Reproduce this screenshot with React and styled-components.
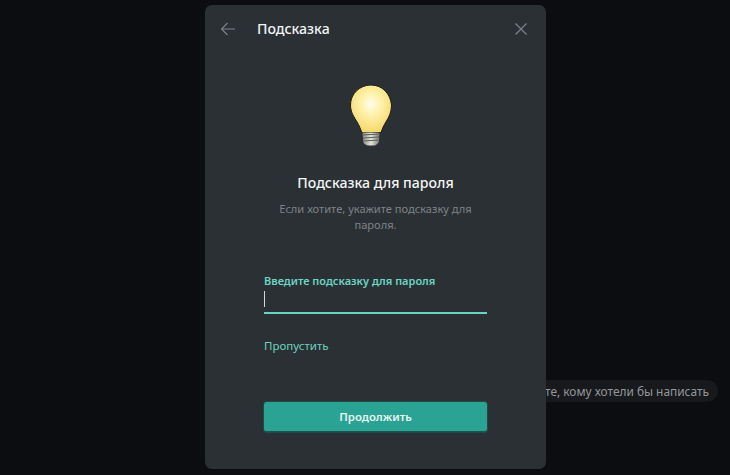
import styled, { createGlobalStyle } from "styled-components";

const GlobalStyle = createGlobalStyle`
  html, body {
    margin: 0;
    height: 100%;
    background: #0c0d10;
    font-family: "Noto Sans", "Open Sans", sans-serif;
  }
  #root {
    height: 100%;
  }
`;

const Page = styled.div`
  position: relative;
  width: 730px;
  height: 475px;
  overflow: hidden;
  padding: 5px 0 0 205px;
  box-sizing: border-box;
`;

const ChatHint = styled.div`
  position: absolute;
  left: 450px;
  top: 380px;
  width: 268px;
  height: 22px;
  box-sizing: border-box;
  padding-right: 9px;
  border-radius: 11px;
  background: #17191d;
  color: #94979a;
  font-size: 11.9px;
  line-height: 22px;
  text-align: right;
  white-space: nowrap;
`;

const Modal = styled.div`
  position: relative;
  width: 341px;
  height: 464px;
  border-radius: 7px;
  background: #2a3034;
  display: flex;
  flex-direction: column;
`;

const Header = styled.header`
  height: 48px;
  display: flex;
  align-items: center;
  padding: 0 17px 0 15px;
`;

const IconButton = styled.button`
  width: 16px;
  height: 16px;
  padding: 0;
  border: 0;
  background: none;
  color: #7c8287;
  display: flex;
`;

const HeaderTitle = styled.h1`
  flex: 1;
  margin: 0 0 2px 21px;
  color: #f1f3f3;
  font-size: 14.1px;
  font-weight: 500;
`;

const Body = styled.div`
  display: flex;
  flex-direction: column;
  padding: 0 59px;
`;

const Bulb = styled.svg`
  display: block;
  align-self: center;
  margin: 31px 10px 0 0;
`;

const Title = styled.h2`
  margin: 26px -20px 0;
  color: #f3f5f5;
  font-size: 14.1px;
  line-height: 20px;
  font-weight: 500;
  text-align: center;
`;

const Description = styled.p`
  margin: 8px 0 0;
  color: #7d8388;
  font-size: 11.1px;
  line-height: 16px;
  text-align: center;
`;

const FieldLabel = styled.label`
  display: block;
  margin-top: 40px;
  color: #6bd6c3;
  font-size: 11px;
  line-height: 16px;
  font-weight: 600;
`;

const Field = styled.div`
  height: 23px;
  margin-top: 2px;
  box-sizing: border-box;
  border-bottom: 2px solid #66d5c2;
`;

const Caret = styled.div`
  width: 1px;
  height: 16px;
  background: #d4d7d8;
`;

const SkipLink = styled.a`
  display: block;
  margin-top: 24px;
  color: #6bd0bf;
  font-size: 11.5px;
  line-height: 16px;
`;

const SubmitButton = styled.button`
  height: 30px;
  margin-top: 48px;
  border: 0;
  border-bottom: 1px solid #16564e;
  border-radius: 3px;
  background: #2ba394;
  box-shadow: 0 0 0 1px #234a47;
  color: #e6f6f3;
  font-family: inherit;
  font-size: 11.4px;
  font-weight: 600;
`;

function LightBulb() {
  return (
    <Bulb width="42" height="63" viewBox="0 0 42 62">
      <defs>
        <radialGradient id="glass" cx="0.5" cy="0.4" r="0.62">
          <stop offset="0" stopColor="#fffdf0" />
          <stop offset="0.35" stopColor="#fff3b0" />
          <stop offset="1" stopColor="#f4d768" />
        </radialGradient>
        <linearGradient id="cap" x1="0" x2="1" y1="0" y2="0">
          <stop offset="0" stopColor="#8a8a84" />
          <stop offset="0.5" stopColor="#e4e4de" />
          <stop offset="1" stopColor="#77776f" />
        </linearGradient>
      </defs>
      <path
        d="M21 .5C9.6.5.5 9.4.5 20.5c0 7.4 3.6 12 6.6 17 2 3.4 3.6 7 4.6 10.5h19.4c1-3.6 2.9-7.4 4.9-10.7 3-4.9 5.5-9.4 5.5-16.8C40.5 9.4 32.4.5 21 .5z"
        fill="url(#glass)"
        stroke="#1f1c12"
        strokeWidth="1"
      />
      <path d="M12.5 48h17l-.6 9.5c-.6 1.4-2.4 3-4.4 3.6h-6.6c-2.2-.6-4-2-4.6-3.6z" fill="url(#cap)" />
      <path d="M12.5 50.5l17-1M13 53.5l16-1M13.5 56.5l15-1" stroke="#5d5d56" strokeWidth="1" fill="none" />
    </Bulb>
  );
}

export default function App() {
  return (
    <Page>
      <GlobalStyle />
      <ChatHint>Выберите, кому хотели бы написать</ChatHint>
      <Modal>
        <Header>
          <IconButton aria-label="Назад">
            <svg width="16" height="16" viewBox="0 0 16 16" fill="none" stroke="currentColor" strokeWidth="1.1">
              <path d="M15 8H1.5M7.5 2l-6 6 6 6" />
            </svg>
          </IconButton>
          <HeaderTitle>Подсказка</HeaderTitle>
          <IconButton aria-label="Закрыть">
            <svg width="16" height="16" viewBox="0 0 16 16" fill="none" stroke="currentColor" strokeWidth="1.2">
              <path d="M2.5 2.5l11 11M13.5 2.5l-11 11" />
            </svg>
          </IconButton>
        </Header>
        <Body>
          <LightBulb />
          <Title>Подсказка для пароля</Title>
          <Description>Если хотите, укажите подсказку для пароля.</Description>
          <FieldLabel>Введите подсказку для пароля</FieldLabel>
          <Field>
            <Caret />
          </Field>
          <SkipLink>Пропустить</SkipLink>
          <SubmitButton>Продолжить</SubmitButton>
        </Body>
      </Modal>
    </Page>
  );
}
